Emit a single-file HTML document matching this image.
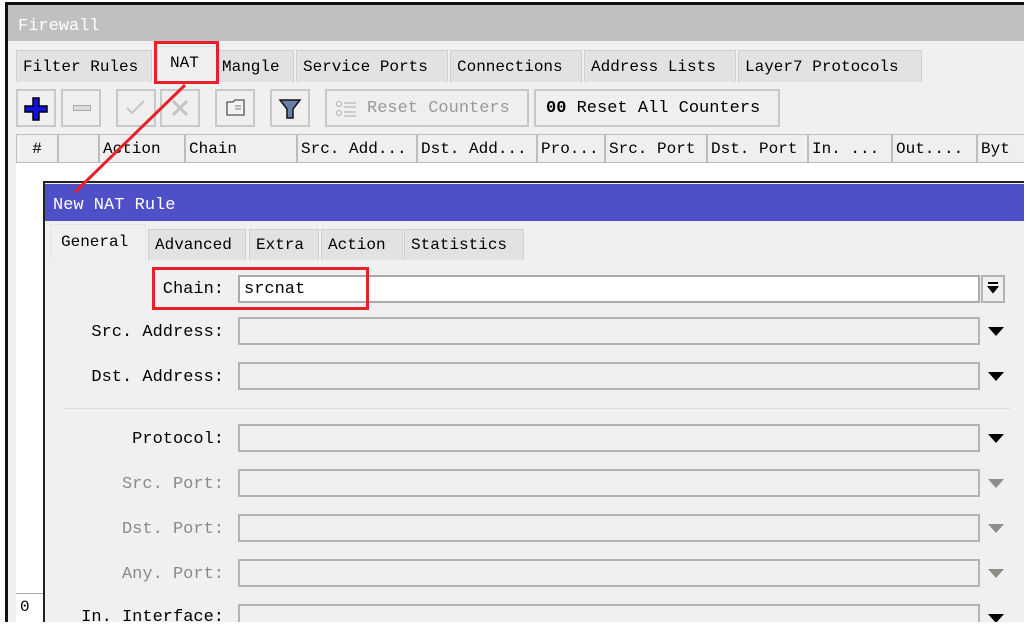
<!DOCTYPE html>
<html><head><meta charset="utf-8"><style>
*{margin:0;padding:0;box-sizing:border-box}
body{width:1032px;height:632px;background:#fff;position:relative;overflow:hidden;font-family:"Liberation Mono","Noto Sans CJK SC",monospace;font-size:16px;color:#000}
.a{position:absolute;white-space:nowrap}
.tab{position:absolute;top:50px;height:32px;background:#e2e2e2;border:1px solid #d0d0d0;border-bottom:none;line-height:32px;padding-left:6px}
.btn{position:absolute;top:89px;height:38px;border:2px solid #c8c8c8;background:#efefef}
.th{position:absolute;top:134px;height:29px;border:1px solid #bdbdbd;background:#efefef;line-height:28px;padding-left:3px}
.lbl{position:absolute;right:808px;text-align:right;font-size:17px}
.fld{position:absolute;left:238px;width:742px;height:28px;border:2px solid #b4b4b4;background:#f0f0f0}
.arr{position:absolute;left:988px;width:0;height:0;border-left:8px solid transparent;border-right:8px solid transparent;border-top:9px solid #000}
.g{color:#8a8a8a}
</style></head><body>
<div class="a" style="left:5px;top:2px;width:1030px;height:622px;border:3px solid #111;border-right:none;border-bottom:none;background:#f0f0f0"></div>
<div class="a" style="left:8px;top:5px;width:1024px;height:36px;background:#c0c0c0"></div>
<div class="a" style="left:18px;top:17px;color:#fff;font-size:17px">Firewall</div>
<div class="a" style="left:8px;top:41px;width:1024px;height:9px;background:#f0f0f0"></div>
<div class="tab" style="left:16px;width:136px">Filter Rules</div>
<div class="tab" style="left:157px;width:60px;background:#efefef;border-color:#e0e0e0;padding-left:12px;top:46px">NAT</div>
<div class="tab" style="left:218px;width:76px;padding-left:3px">Mangle</div>
<div class="tab" style="left:296px;width:152px">Service Ports</div>
<div class="tab" style="left:450px;width:132px">Connections</div>
<div class="tab" style="left:584px;width:152px">Address Lists</div>
<div class="tab" style="left:738px;width:184px">Layer7 Protocols</div>
<div class="btn" style="left:16px;width:40px"><svg width="36" height="34"><path d="M15 7h6v8h8v6h-8v8h-6v-8H7v-6h8z" fill="#1010e0" stroke="#000" stroke-width="1.5"/></svg></div>
<div class="btn" style="left:61px;width:40px"><div class="a" style="left:10px;top:14px;width:18px;height:6px;border:1px solid #aaa;background:#ddd"></div></div>
<div class="btn" style="left:116px;width:40px"><svg width="36" height="34"><path d="M9 17l5 5 12-12" fill="none" stroke="#c4c4c4" stroke-width="2"/></svg></div>
<div class="btn" style="left:160px;width:40px"><svg width="36" height="34"><path d="M11 10l14 14M25 10L11 24" fill="none" stroke="#c4c4c4" stroke-width="3"/></svg></div>
<div class="btn" style="left:215px;width:40px"><svg width="36" height="34"><path d="M10 11h6l2-2h9v15H10z" fill="#f4f4f4" stroke="#555" stroke-width="1.3"/><path d="M18 15h6M18 18h6" stroke="#777"/></svg></div>
<div class="btn" style="left:270px;width:40px"><svg width="36" height="34"><path d="M8 9h20l-7 9v9h-6v-9z" fill="#6a7fa8" stroke="#111" stroke-width="1.5"/></svg></div>
<div class="btn" style="left:325px;width:204px;color:#999;line-height:36px;padding-left:40px;font-size:17px">Reset Counters<svg class="a" style="left:8px;top:9px" width="24" height="18"><circle cx="4" cy="4" r="2.5" fill="none" stroke="#aaa"/><circle cx="4" cy="13" r="2.5" fill="none" stroke="#aaa"/><path d="M9 3h12M9 7h12M9 12h12M9 16h12" stroke="#aaa"/></svg></div>
<div class="btn" style="left:534px;width:246px;line-height:36px;padding-left:10px;font-size:17px"><b>00</b> Reset All Counters</div>
<div class="th" style="left:16px;width:42px;text-align:center;padding:0">#</div>
<div class="th" style="left:58px;width:41px"></div>
<div class="th" style="left:99px;width:86px">Action</div>
<div class="th" style="left:185px;width:112px">Chain</div>
<div class="th" style="left:297px;width:120px">Src. Add...</div>
<div class="th" style="left:417px;width:120px">Dst. Add...</div>
<div class="th" style="left:537px;width:68px">Pro...</div>
<div class="th" style="left:605px;width:102px">Src. Port</div>
<div class="th" style="left:707px;width:101px">Dst. Port</div>
<div class="th" style="left:808px;width:84px">In. ...</div>
<div class="th" style="left:892px;width:85px">Out....</div>
<div class="th" style="left:977px;width:60px">Byt</div>
<div class="a" style="left:16px;top:163px;width:1016px;height:430px;background:#fff"></div>
<div class="a" style="left:16px;top:593px;width:28px;height:30px;border-top:1px solid #aaa;background:#fff;padding:4px 0 0 4px">0</div>
<div class="a" style="left:43px;top:181px;width:990px;height:441px;border:2px solid #222;border-right:none;border-bottom:none;background:#f0f0f0"></div>
<div class="a" style="left:45px;top:184px;width:987px;height:37px;background:#4f50c8"></div>
<div class="a" style="left:53px;top:196px;color:#fff;font-size:17px">New NAT Rule</div>
<div class="tab" style="left:50px;top:224px;width:96px;background:#f0f0f0;border-color:#e4e4e4;height:36px;padding-left:10px;line-height:34px">General</div>
<div class="tab" style="left:148px;top:229px;width:98px;line-height:30px;height:31px">Advanced</div>
<div class="tab" style="left:249px;top:229px;width:70px;line-height:30px;height:31px">Extra</div>
<div class="tab" style="left:321px;top:229px;width:82px;line-height:30px;height:31px">Action</div>
<div class="tab" style="left:404px;top:229px;width:120px;line-height:30px;height:31px">Statistics</div>
<div class="lbl" style="top:280px">Chain:</div>
<div class="fld" style="top:275px;background:#fff;border-color:#aaa;padding:3px 4px;font-size:17px">srcnat</div>
<div class="a" style="left:981px;top:275px;width:24px;height:28px;border:2px solid #b4b4b4"><svg width="20" height="24"><path d="M5 6h10M6 10h8l-4 5z" stroke="#000" stroke-width="2" fill="#000"/></svg></div>
<div class="lbl" style="top:323px">Src. Address:</div><div class="fld" style="top:317px"></div><div class="arr" style="top:327px"></div>
<div class="lbl" style="top:368px">Dst. Address:</div><div class="fld" style="top:362px"></div><div class="arr" style="top:372px"></div>
<div class="a" style="left:64px;top:408px;width:946px;height:1px;background:#ddd"></div>
<div class="lbl" style="top:430px">Protocol:</div><div class="fld" style="top:424px"></div><div class="arr" style="top:434px"></div>
<div class="lbl g" style="top:475px">Src. Port:</div><div class="fld" style="top:469px"></div><div class="arr" style="top:479px;border-top-color:#8a9088"></div>
<div class="lbl g" style="top:520px">Dst. Port:</div><div class="fld" style="top:514px"></div><div class="arr" style="top:524px;border-top-color:#8a9088"></div>
<div class="lbl g" style="top:565px">Any. Port:</div><div class="fld" style="top:559px"></div><div class="arr" style="top:569px;border-top-color:#8a9088"></div>
<div class="lbl" style="top:608px">In. Interface:</div><div class="fld" style="top:604px"></div><div class="arr" style="top:614px"></div>
<div class="a" style="left:0;top:622px;width:1032px;height:10px;background:#fff"></div>
<div class="a" style="left:1024px;top:0;width:8px;height:632px;background:#fff"></div>
<div class="a" style="left:154px;top:41px;width:65px;height:43px;border:3px solid #e8202a"></div>
<div class="a" style="left:152px;top:267px;width:217px;height:43px;border:3px solid #e8202a"></div>
<svg class="a" style="left:0;top:0" width="300" height="220"><path d="M185 85L75 192" stroke="#e8202a" stroke-width="3"/></svg>
</body></html>
